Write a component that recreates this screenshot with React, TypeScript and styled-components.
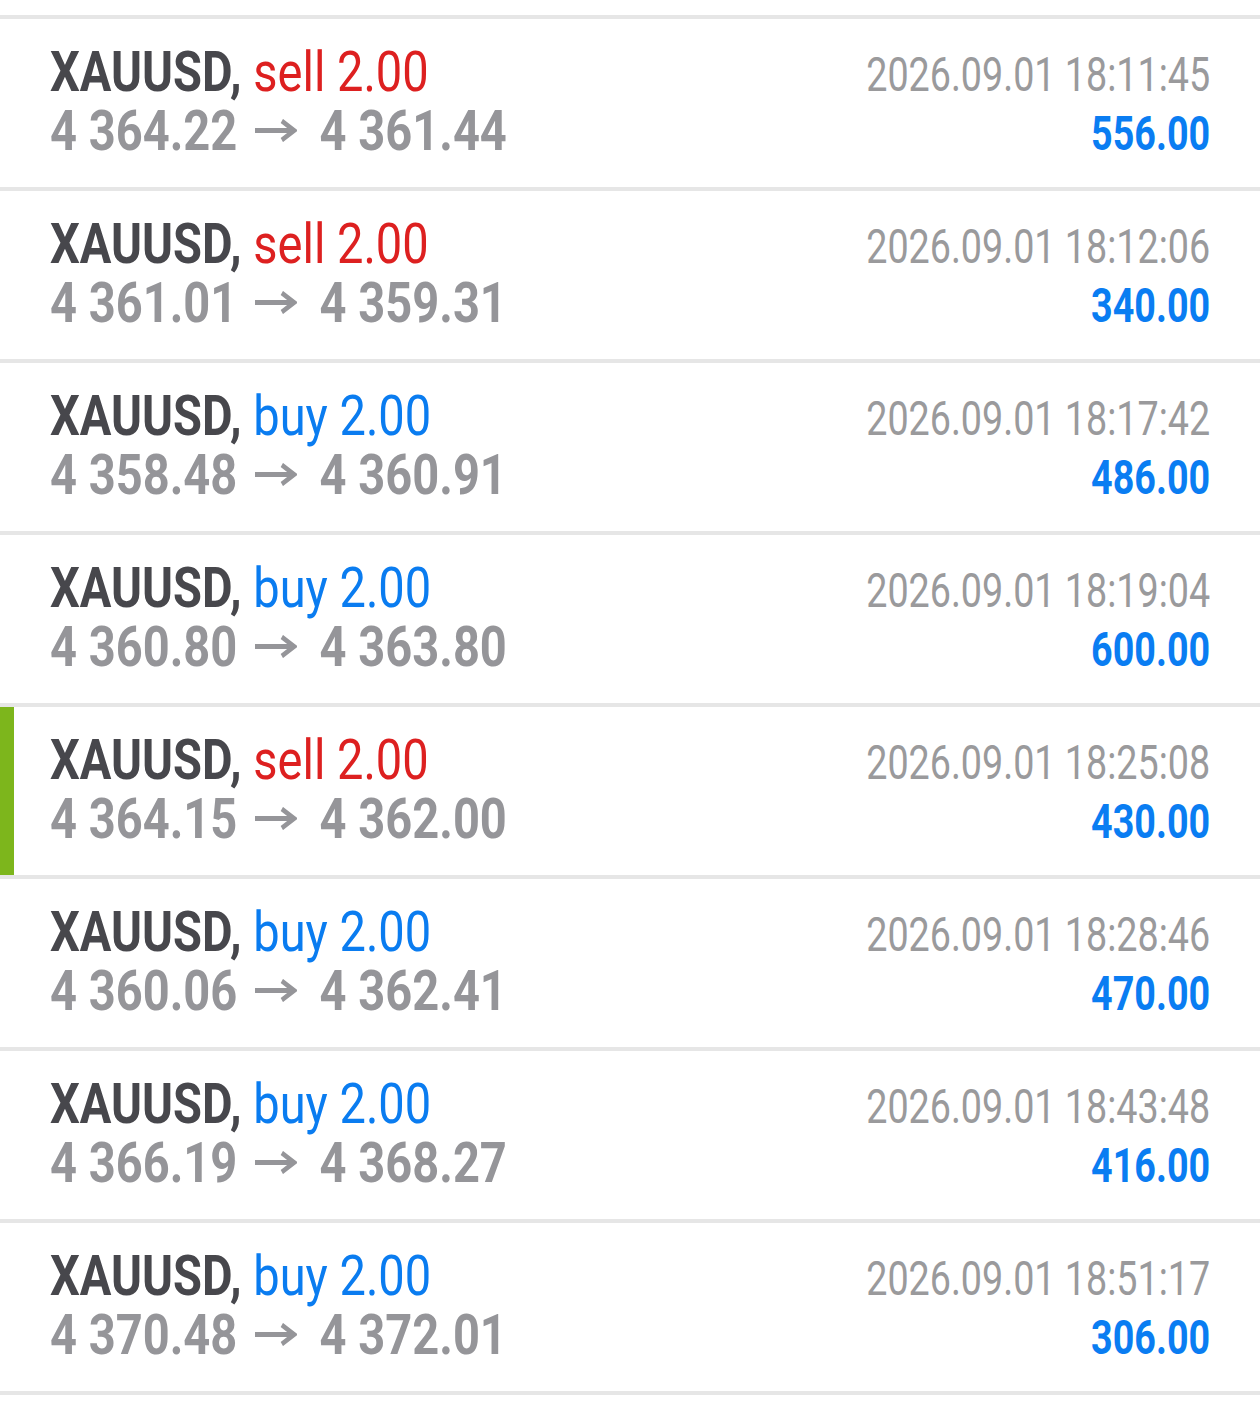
import * as React from 'react';
import styled, { createGlobalStyle } from 'styled-components';

type Side = 'buy' | 'sell';

interface Deal {
    side: Side;
    open: string;
    close: string;
    time: string;
    profit: string;
    marked?: boolean;
}

const deals: Deal[] = [
    { side: 'sell', open: '4 364.22', close: '4 361.44', time: '2026.09.01 18:11:45', profit: '556.00' },
    { side: 'sell', open: '4 361.01', close: '4 359.31', time: '2026.09.01 18:12:06', profit: '340.00' },
    { side: 'buy', open: '4 358.48', close: '4 360.91', time: '2026.09.01 18:17:42', profit: '486.00' },
    { side: 'buy', open: '4 360.80', close: '4 363.80', time: '2026.09.01 18:19:04', profit: '600.00' },
    { side: 'sell', open: '4 364.15', close: '4 362.00', time: '2026.09.01 18:25:08', profit: '430.00', marked: true },
    { side: 'buy', open: '4 360.06', close: '4 362.41', time: '2026.09.01 18:28:46', profit: '470.00' },
    { side: 'buy', open: '4 366.19', close: '4 368.27', time: '2026.09.01 18:43:48', profit: '416.00' },
    { side: 'buy', open: '4 370.48', close: '4 372.01', time: '2026.09.01 18:51:17', profit: '306.00' },
];

const GlobalStyle = createGlobalStyle`
    html, body {
        margin: 0;
        padding: 0;
        background: #ffffff;
        font-family: Roboto, "Liberation Sans", sans-serif;
    }
`;

const Page = styled.div`
    width: 1260px;
    min-height: 1424px;
    background: #ffffff;
    padding-top: 15px;
    box-sizing: border-box;
    overflow: hidden;
`;

const List = styled.div`
    display: flex;
    flex-direction: column;
    border-top: 4px solid #e6e6e6;
`;

const Row = styled.div<{ $marked?: boolean }>`
    display: grid;
    grid-template-columns: 1fr auto;
    grid-auto-rows: 59px;
    align-items: baseline;
    padding: 24px 50px 26px;
    border-bottom: 4px solid #e6e6e6;
    box-shadow: ${(p) => (p.$marked ? 'inset 14px 0 0 #7db61c' : 'none')};
`;

// the app uses a condensed face; Roboto is squeezed to match
const Left = styled.div`
    white-space: nowrap;
    font-size: 56px;
    line-height: 59px;
    transform: scaleX(0.84);
    transform-origin: left center;
`;

const Right = styled.div`
    white-space: nowrap;
    text-align: right;
    font-size: 48px;
    line-height: 59px;
    transform: scaleX(0.785);
    transform-origin: right center;
`;

const Symbol = styled(Left)`
    font-weight: 700;
    color: #47474c;
`;

const Volume = styled.span<{ $side: Side }>`
    font-weight: 400;
    color: ${(p) => (p.$side === 'sell' ? '#dd2020' : '#0a7cf0')};
`;

const Prices = styled(Left)`
    font-weight: 700;
    color: #959599;
`;

const ArrowIcon = styled.svg`
    display: inline-block;
    width: 50px;
    height: 23px;
    margin: 0 27px 0 21px;
    vertical-align: 8px;
`;

const Time = styled(Right)`
    font-weight: 400;
    color: #9a9a9c;
`;

const Profit = styled(Right)`
    font-weight: 700;
    color: #0a7df2;
`;

const Arrow = () => (
    <ArrowIcon viewBox="0 0 50 23" preserveAspectRatio="none">
        <path d="M0 11.5H46" stroke="currentColor" strokeWidth="5" fill="none" />
        <path d="M32 2L46.5 11.5L32 21" stroke="currentColor" strokeWidth="5" fill="none" />
    </ArrowIcon>
);

const DealRow = ({ deal }: { deal: Deal }) => (
    <Row $marked={deal.marked}>
        <Symbol>
            XAUUSD, <Volume $side={deal.side}>{deal.side} 2.00</Volume>
        </Symbol>
        <Time>{deal.time}</Time>
        <Prices>
            {deal.open}
            <Arrow />
            {deal.close}
        </Prices>
        <Profit>{deal.profit}</Profit>
    </Row>
);

const App = () => (
    <Page>
        <GlobalStyle />
        <List>
            {deals.map((d, i) => (
                <DealRow key={i} deal={d} />
            ))}
        </List>
    </Page>
);

export default App;
